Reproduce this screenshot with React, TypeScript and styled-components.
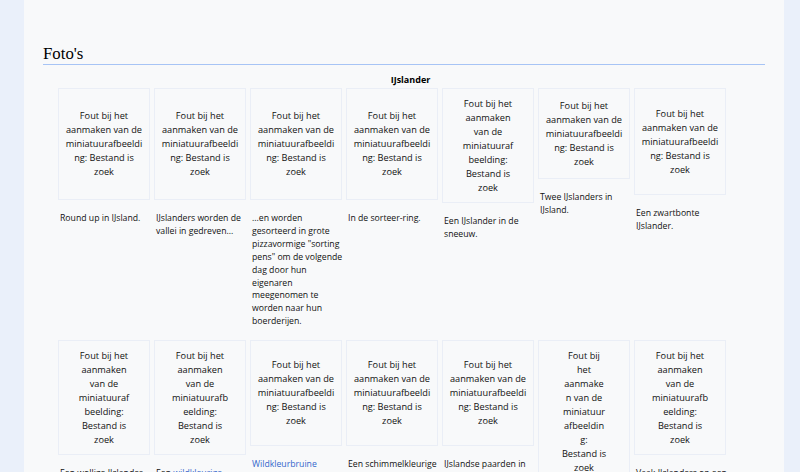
import React from 'react';
import styled, { createGlobalStyle } from 'styled-components';

const GlobalStyle = createGlobalStyle`
  html, body { margin: 0; padding: 0; background: #eaf0fa; }
  body { font-family: "Open Sans", "Noto Sans", sans-serif; color: #111; }
`;

const Page = styled.div`
  margin: 0 16px 0 24px;
  height: 472px;
  background: #f8f9fa;
  padding: 44px 19px 0;
  box-sizing: border-box;
  overflow: hidden;
`;

const Heading = styled.h2`
  margin: 0;
  font-family: "Liberation Serif", "Times New Roman", serif;
  font-weight: normal;
  font-size: 16.8px;
  line-height: 20px;
  color: #000;
  border-bottom: 1px solid #a7c4f5;
`;

const Gallery = styled.ul`
  list-style: none;
  margin: 8px 0 0 13px;
  padding: 0;
  display: flex;
  flex-wrap: wrap;
  align-items: flex-start;
`;

const GalleryCaption = styled.li`
  flex: 0 0 100%;
  text-align: center;
  font-weight: 700;
  font-size: 9px;
  line-height: 13px;
  color: #000;
`;

const Item = styled.li`
  width: 92px;
  margin: 2px;
`;

const Thumb = styled.div<{ $h: number }>`
  height: ${(p) => p.$h}px;
  box-sizing: border-box;
  border: 1px solid #eaeef6;
  display: flex;
  flex-direction: column;
  align-items: center;
  justify-content: center;
  text-align: center;
  font-size: 9.2px;
  line-height: 14px;
  color: #111;
`;

const Line = styled.span`
  display: block;
  white-space: nowrap;
`;

const CaptionText = styled.div`
  padding: 12px 2px 8px;
  font-size: 8.7px;
  line-height: 12.9px;
  color: #111;
`;

const Link = styled.a`
  color: #3366cc;
  text-decoration: none;
`;

type Part = string | { link: string };
type Photo = { h: number; thumb: string[]; caption: Part[][] };

const A = ['Fout bij het', 'aanmaken van de', 'miniatuurafbeeldi', 'ng: Bestand is', 'zoek'];
const B = ['Fout bij het', 'aanmaken', 'van de', 'miniatuuraf', 'beelding:', 'Bestand is', 'zoek'];
const C = ['Fout bij het', 'aanmaken', 'van de', 'miniatuurafb', 'eelding:', 'Bestand is', 'zoek'];
const D = ['Fout bij', 'het', 'aanmake', 'n van de', 'miniatuur', 'afbeeldin', 'g:', 'Bestand is', 'zoek'];

const photos: Photo[] = [
  { h: 112, thumb: A, caption: [['Round up in IJsland.']] },
  { h: 112, thumb: A, caption: [['IJslanders worden de'], ['vallei in gedreven...']] },
  {
    h: 112,
    thumb: A,
    caption: [
      ['...en worden'],
      ['gesorteerd in grote'],
      ['pizzavormige "sorting'],
      ['pens" om de volgende'],
      ['dag door hun'],
      ['eigenaren'],
      ['meegenomen te'],
      ['worden naar hun'],
      ['boerderijen.'],
    ],
  },
  { h: 112, thumb: A, caption: [['In de sorteer-ring.']] },
  { h: 115, thumb: B, caption: [['Een IJslander in de'], ['sneeuw.']] },
  { h: 91, thumb: A, caption: [['Twee IJslanders in'], ['IJsland.']] },
  { h: 107, thumb: A, caption: [['Een zwartbonte'], ['IJslander.']] },
  { h: 115, thumb: B, caption: [['Een wollige IJslander'], ['in de winter.']] },
  { h: 115, thumb: C, caption: [['Een ', { link: 'wildkleurige' }], ['IJslander.']] },
  { h: 106, thumb: A, caption: [[{ link: 'Wildkleurbruine' }], ['IJslander.']] },
  { h: 106, thumb: A, caption: [['Een schimmelkleurige'], ['IJslander.']] },
  { h: 106, thumb: A, caption: [['IJslandse paarden in'], ['de wei.']] },
  { h: 144, thumb: D, caption: [['IJslander.']] },
  { h: 115, thumb: C, caption: [['Vaak IJslanders op een'], ['rij.']] },
];

export default function App() {
  return (
    <>
      <GlobalStyle />
      <Page>
        <Heading>Foto's</Heading>
        <Gallery>
          <GalleryCaption>IJslander</GalleryCaption>
          {photos.map((p, i) => (
            <Item key={i}>
              <Thumb $h={p.h}>
                {p.thumb.map((t, j) => (
                  <Line key={j}>{t}</Line>
                ))}
              </Thumb>
              <CaptionText>
                {p.caption.map((line, j) => (
                  <Line key={j}>
                    {line.map((part, k) =>
                      typeof part === 'string' ? (
                        <React.Fragment key={k}>{part}</React.Fragment>
                      ) : (
                        <Link key={k} href="#">
                          {part.link}
                        </Link>
                      )
                    )}
                  </Line>
                ))}
              </CaptionText>
            </Item>
          ))}
        </Gallery>
      </Page>
    </>
  );
}
